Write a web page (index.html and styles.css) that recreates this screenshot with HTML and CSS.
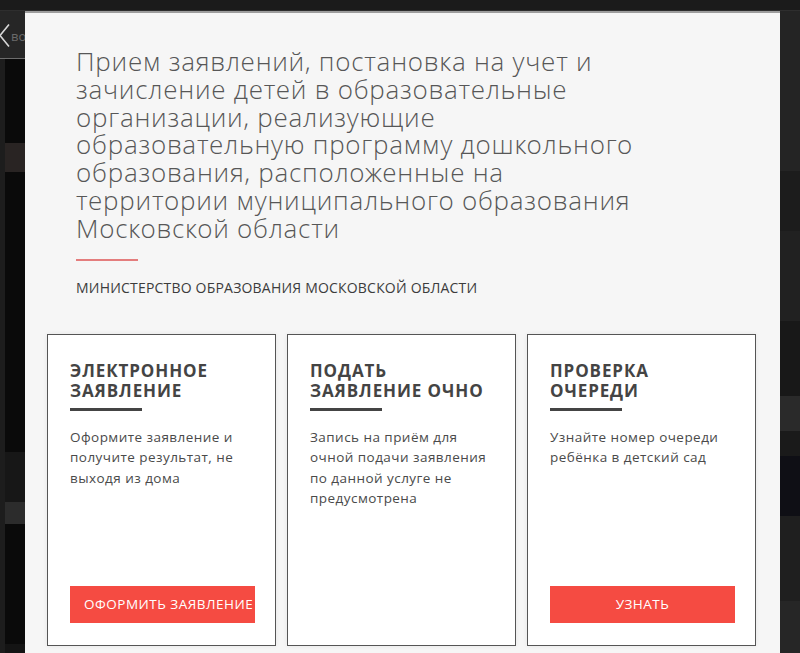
FILE: index.html
```html
<!DOCTYPE html>
<html lang="ru">
<head>
<meta charset="utf-8">
<title>Прием заявлений в детский сад</title>
<link rel="stylesheet" href="styles.css">
</head>
<body>
<div class="screen">
  <div class="topbar"></div>
  <div class="stage">
    <aside class="side side-left">
      <div class="back">
        <svg class="back-icon" width="12" height="26" viewBox="0 0 12 26" aria-hidden="true">
          <path d="M10 1.5 L1 12.5 L10 23.5" fill="none" stroke="#d8d8d8" stroke-width="1.6"/>
        </svg>
        <span class="back-text">во</span>
      </div>
      <div class="strip">
        <div class="strip-edge"></div>
        <div class="strip-body">
          <div class="band b-black h84"></div>
          <div class="band b-brown h29"></div>
          <div class="band b-black h280"></div>
          <div class="band b-dark h50"></div>
          <div class="band b-grey h22"></div>
          <div class="band b-black h120"></div>
        </div>
      </div>
    </aside>

    <section class="modal">
      <header class="intro">
        <h1 class="title">Прием заявлений, постановка на учет и<br>
          зачисление детей в образовательные<br>
          организации, реализующие<br>
          образовательную программу дошкольного<br>
          образования, расположенные на<br>
          территории муниципального образования<br>
          Московской области</h1>
        <div class="accent"></div>
        <p class="org">Министерство образования Московской области</p>
      </header>

      <div class="cards">
        <article class="card">
          <h2 class="card-title">Электронное заявление</h2>
          <p class="card-text">Оформите заявление и получите результат, не выходя из дома</p>
          <a class="btn" href="#">Оформить заявление</a>
        </article>
        <article class="card">
          <h2 class="card-title">Подать заявление очно</h2>
          <p class="card-text">Запись на приём для очной подачи заявления по данной услуге не предусмотрена</p>
        </article>
        <article class="card">
          <h2 class="card-title">Проверка очереди</h2>
          <p class="card-text">Узнайте номер очереди ребёнка в детский сад</p>
          <a class="btn" href="#">Узнать</a>
        </article>
      </div>
    </section>

    <aside class="side side-right">
      <div class="band r-1 h160"></div>
      <div class="band r-2 h60"></div>
      <div class="band r-3 h90"></div>
      <div class="band r-4 h75"></div>
      <div class="band r-5 h35"></div>
      <div class="band r-6 h25"></div>
      <div class="band r-7 h60"></div>
      <div class="band r-8 h85"></div>
      <div class="band r-9 h60"></div>
    </aside>
  </div>
</div>
</body>
</html>
```

FILE: styles.css
```css
* {
  box-sizing: border-box;
}

html, body {
  margin: 0;
  padding: 0;
  background: #141414;
}

body {
  font-family: "Open Sans", "Noto Sans", sans-serif;
  color: #444;
  overflow: hidden;
}

.screen {
  width: 800px;
  height: 653px;
  display: flex;
  flex-direction: column;
  overflow: hidden;
}

.topbar {
  height: 11px;
  flex: none;
  background: #1b1b1b;
  border-bottom: 1px solid #2e2e2e;
}

.stage {
  flex: 1;
  display: flex;
  min-height: 0;
}

/* dimmed page behind the dialog */
.side {
  flex: none;
  display: flex;
  flex-direction: column;
  overflow: hidden;
}

.side-left {
  width: 25px;
}

.side-right {
  width: 20px;
  background: #222;
}

.back {
  height: 48px;
  flex: none;
  background: #262626;
  border-bottom: 1px solid #6d6d6d;
  display: flex;
  align-items: center;
  padding-top: 2px;
  white-space: nowrap;
  overflow: hidden;
}

.back-icon {
  flex: none;
  margin-left: -1px;
}

.back-text {
  font-size: 13px;
  color: #6a6a6a;
}

.strip {
  flex: 1;
  display: flex;
}

.strip-edge {
  width: 5px;
  background: #1d1d1d;
}

.strip-body {
  flex: 1;
  display: flex;
  flex-direction: column;
}

.band { flex: none; }
.h22 { height: 22px; }
.h25 { height: 25px; }
.h29 { height: 29px; }
.h35 { height: 35px; }
.h50 { height: 50px; }
.h60 { height: 60px; }
.h75 { height: 75px; }
.h84 { height: 84px; }
.h85 { height: 85px; }
.h90 { height: 90px; }
.h120 { height: 120px; }
.h160 { height: 160px; }
.h280 { height: 280px; }

.b-black { background: #0a0a0a; }
.b-brown { background: #292423; }
.b-dark { background: #171717; }
.b-grey { background: #2c2c2c; }

.r-1 { background: #242424; }
.r-2 { background: #1c1c1c; }
.r-3 { background: #212121; }
.r-4 { background: #181818; }
.r-5 { background: #2a2a2a; }
.r-6 { background: #1a1a1a; }
.r-7 { background: #0f0f15; }
.r-8 { background: #1f1f1f; }
.r-9 { background: #262626; }

/* dialog */
.modal {
  width: 755px;
  flex: none;
  background: #f6f6f6;
  border-top: 2px solid #9d9d9d;
  padding: 35px 24px 0 22px;
}

.intro {
  padding-left: 29px;
}

.title {
  margin: 0;
  font-family: "Open Sans Light", "Open Sans", "Noto Sans", sans-serif;
  font-size: 26px;
  line-height: 27.8px;
  font-weight: 300;
  color: #575757;
  letter-spacing: 0.75px;
  white-space: nowrap;
}

.accent {
  width: 62px;
  height: 2px;
  background: #e47d7d;
  margin-top: 16px;
}

.org {
  margin: 17px 0 0;
  font-size: 14px;
  line-height: 20px;
  letter-spacing: 0.2px;
  text-transform: uppercase;
  color: #3c3c3c;
}

.cards {
  margin-top: 36px;
  display: grid;
  grid-template-columns: repeat(3, 229px);
  gap: 11px;
}

.card {
  height: 312px;
  background: #fff;
  border: 1px solid #555;
  box-shadow: 0 0 5px rgba(0, 0, 0, 0.07);
  padding: 26px 20px 22px 22px;
  display: flex;
  flex-direction: column;
}

.card-title {
  margin: 0;
  font-size: 17px;
  line-height: 20px;
  font-weight: 700;
  text-transform: uppercase;
  letter-spacing: 0.9px;
  color: #444;
}

.card-title::after {
  content: "";
  display: block;
  width: 72px;
  height: 3px;
  background: #444;
  margin-top: 7px;
}

.card-text {
  margin: 16px 0 0;
  font-size: 13.5px;
  line-height: 20.5px;
  letter-spacing: 0.45px;
  color: #4a4a4a;
}

.btn {
  display: block;
  margin-top: auto;
  height: 37px;
  width: 185px;
  padding: 0 14px;
  background: #f54b42;
  color: #fff;
  font-size: 13.5px;
  line-height: 37px;
  letter-spacing: 0.5px;
  text-align: center;
  text-transform: uppercase;
  text-decoration: none;
  white-space: nowrap;
}
```
